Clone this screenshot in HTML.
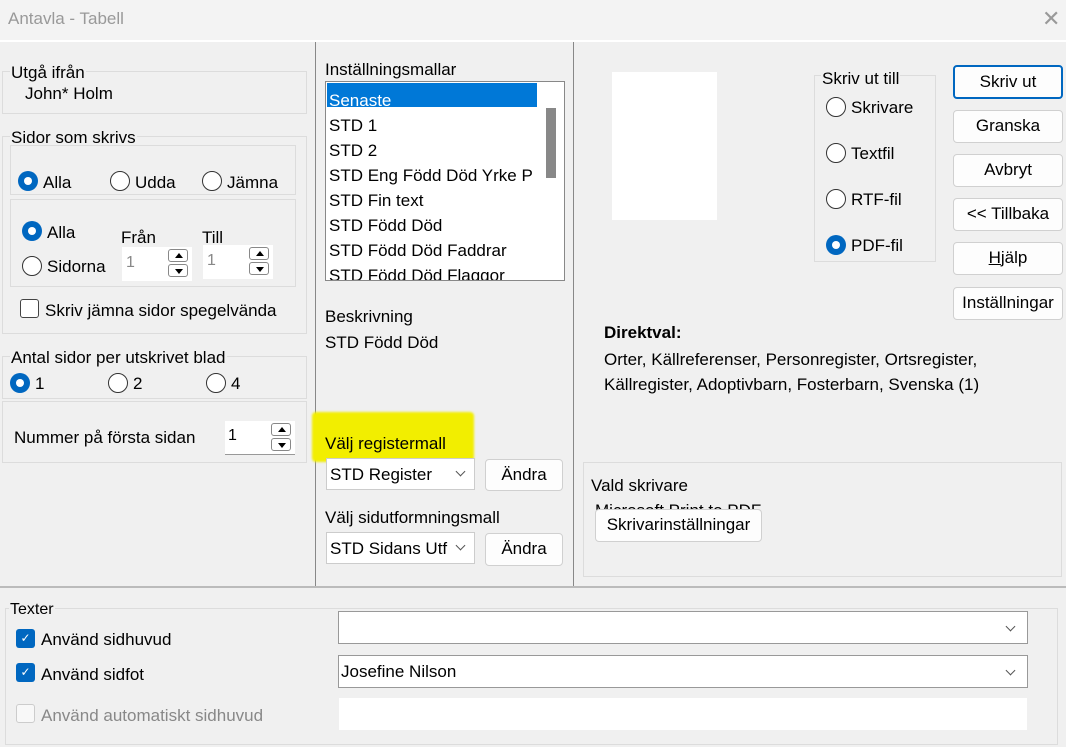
<!DOCTYPE html>
<html><head><meta charset="utf-8"><style>
*{box-sizing:border-box;margin:0;padding:0}
body{width:1066px;height:747px;background:#f0f0f0;font-family:"Liberation Sans",sans-serif;font-size:16px;color:#000;position:relative;overflow:hidden}
.a{position:absolute;white-space:nowrap}
.g{position:absolute;border:1px solid #dcdcdc}
.lb{position:absolute;background:#f0f0f0;padding:0 1px;line-height:18px}
.r{position:absolute;width:20px;height:20px;border-radius:50%;border:1px solid #333;background:#fff}
.r.on{border:none;background:#0067c0}
.r.on::after{content:"";position:absolute;left:6px;top:6px;width:8px;height:8px;border-radius:50%;background:#fff}
.btn{position:absolute;background:#fdfdfd;border:1px solid #d0d0d0;border-radius:4px;text-align:center;line-height:30px;font-size:17px}
.spin{position:absolute;background:#fff}
.spin .u,.spin .d{position:absolute;right:4px;width:20px;height:13px;border:1px solid #888;border-radius:3px;background:#fff}
.spin .u::after{content:"";position:absolute;left:6px;top:3px;border:4px solid transparent;border-bottom:5px solid #000;border-top:none}
.spin .d::after{content:"";position:absolute;left:6px;top:4px;border:4px solid transparent;border-top:5px solid #000;border-bottom:none}
.cb{position:absolute;background:#fff;border:1px solid #888}
.chev{position:absolute;width:7px;height:7px;border-right:1px solid #555;border-bottom:1px solid #555;transform:rotate(45deg)}
.t17{font-size:17px}
</style></head><body>
<div class="a" style="left:0;top:0;width:1066px;height:40px;background:#f3f3f3"></div>
<div class="a" style="left:8px;top:9px;color:#999;font-size:17px">Antavla - Tabell</div>
<div class="a" style="left:1042px;top:6px;color:#999;font-size:22px">✕</div>
<div class="a" style="left:0;top:40px;width:1066px;height:2px;background:#fff"></div>
<div class="a" style="left:315px;top:42px;width:1px;height:545px;background:#888"></div>
<div class="a" style="left:573px;top:42px;width:1px;height:545px;background:#888"></div>
<div class="a" style="left:0;top:586px;width:1066px;height:2px;background:#bbb"></div>

<!-- left -->
<div class="g" style="left:2px;top:71px;width:305px;height:43px"></div>
<div class="lb t17" style="left:10px;top:64px">Utgå ifrån</div>
<div class="a t17" style="left:25px;top:84px">John* Holm</div>

<div class="g" style="left:2px;top:136px;width:305px;height:198px"></div>
<div class="lb t17" style="left:10px;top:129px">Sidor som skrivs</div>
<div class="g" style="left:10px;top:145px;width:286px;height:50px"></div>
<div class="r on" style="left:18px;top:171px"></div><div class="a t17" style="left:43px;top:173px">Alla</div>
<div class="r" style="left:110px;top:171px"></div><div class="a t17" style="left:135px;top:173px">Udda</div>
<div class="r" style="left:202px;top:171px"></div><div class="a t17" style="left:227px;top:173px">Jämna</div>
<div class="g" style="left:10px;top:199px;width:286px;height:88px"></div>
<div class="r on" style="left:22px;top:221px"></div><div class="a t17" style="left:47px;top:223px">Alla</div>
<div class="r" style="left:22px;top:256px"></div><div class="a t17" style="left:47px;top:257px">Sidorna</div>
<div class="a t17" style="left:121px;top:228px">Från</div>
<div class="a t17" style="left:202px;top:228px">Till</div>
<div class="spin" style="left:122px;top:247px;width:70px;height:34px"><span class="a" style="left:4px;top:7px;color:#888">1</span><div class="u" style="top:2px"></div><div class="d" style="top:17px"></div></div>
<div class="spin" style="left:203px;top:245px;width:70px;height:34px"><span class="a" style="left:4px;top:7px;color:#888">1</span><div class="u" style="top:2px"></div><div class="d" style="top:17px"></div></div>
<div class="cb" style="left:20px;top:299px;width:19px;height:19px;border-color:#444;border-radius:3px"></div>
<div class="a t17" style="left:45px;top:301px">Skriv jämna sidor spegelvända</div>

<div class="g" style="left:2px;top:356px;width:305px;height:43px"></div>
<div class="lb t17" style="left:10px;top:349px">Antal sidor per utskrivet blad</div>
<div class="r on" style="left:10px;top:373px"></div><div class="a t17" style="left:35px;top:374px">1</div>
<div class="r" style="left:108px;top:373px"></div><div class="a t17" style="left:133px;top:374px">2</div>
<div class="r" style="left:206px;top:373px"></div><div class="a t17" style="left:231px;top:374px">4</div>
<div class="g" style="left:2px;top:401px;width:305px;height:62px"></div>
<div class="a t17" style="left:14px;top:428px">Nummer på första sidan</div>
<div class="spin" style="left:225px;top:421px;width:70px;height:34px;border-bottom:1px solid #999"><span class="a" style="left:3px;top:6px">1</span><div class="u" style="top:2px"></div><div class="d" style="top:17px"></div></div>

<!-- middle -->
<div class="a t17" style="left:325px;top:60px">Inställningsmallar</div>
<div class="a" style="left:325px;top:81px;width:240px;height:200px;background:#fff;border:1px solid #888;overflow:hidden">
<div class="a" style="left:1px;top:1px;width:210px;height:24px;background:#0078d7"></div>
<div class="a t17" style="left:3px;top:6px;line-height:25px;color:#000">
<span style="color:#fff">Senaste</span><br>STD 1<br>STD 2<br>STD Eng Född Död Yrke P<br>STD Fin text<br>STD Född Död<br>STD Född Död Faddrar<br>STD Född Död Flaggor<br>STD Född Död Foto</div>
<div class="a" style="left:215px;top:0;width:24px;height:200px;background:#fff"></div>
<div class="a" style="left:220px;top:26px;width:10px;height:70px;background:#888"></div>
</div>
<div class="a t17" style="left:325px;top:307px">Beskrivning</div>
<div class="a t17" style="left:325px;top:333px">STD Född Död</div>
<div class="a" style="left:312px;top:412px;width:162px;height:50px;background:#f2ee00;border-radius:4px;filter:blur(1px)"></div>
<div class="a t17" style="left:325px;top:434px">Välj registermall</div>
<div class="a" style="left:326px;top:458px;width:149px;height:32px;background:#fff;border:1px solid #ccc"><span class="a t17" style="left:3px;top:6px">STD Register</span><div class="chev" style="left:130px;top:9px"></div></div>
<div class="btn" style="left:485px;top:459px;width:78px;height:32px">Ändra</div>
<div class="a t17" style="left:325px;top:508px">Välj sidutformningsmall</div>
<div class="a" style="left:326px;top:532px;width:149px;height:32px;background:#fff;border:1px solid #ccc"><span class="a t17" style="left:3px;top:6px">STD Sidans Utf</span><div class="chev" style="left:130px;top:9px"></div></div>
<div class="btn" style="left:485px;top:533px;width:78px;height:33px">Ändra</div>

<!-- right -->
<div class="a" style="left:612px;top:72px;width:105px;height:148px;background:#fff"></div>
<div class="g" style="left:814px;top:75px;width:122px;height:187px"></div>
<div class="lb t17" style="left:821px;top:70px">Skriv ut till</div>
<div class="r" style="left:826px;top:97px"></div><div class="a t17" style="left:851px;top:98px">Skrivare</div>
<div class="r" style="left:826px;top:143px"></div><div class="a t17" style="left:851px;top:144px">Textfil</div>
<div class="r" style="left:826px;top:189px"></div><div class="a t17" style="left:851px;top:190px">RTF-fil</div>
<div class="r on" style="left:826px;top:235px"></div><div class="a t17" style="left:851px;top:236px">PDF-fil</div>
<div class="btn" style="left:953px;top:65px;width:110px;height:34px;border:2px solid #0067c0;line-height:30px">Skriv ut</div>
<div class="btn" style="left:953px;top:110px;width:110px;height:33px">Granska</div>
<div class="btn" style="left:953px;top:154px;width:110px;height:33px">Avbryt</div>
<div class="btn" style="left:953px;top:198px;width:110px;height:33px">&lt;&lt; Tillbaka</div>
<div class="btn" style="left:953px;top:242px;width:110px;height:33px"><u>H</u>jälp</div>
<div class="btn" style="left:953px;top:287px;width:110px;height:33px">Inställningar</div>
<div class="a t17" style="left:604px;top:323px;font-weight:bold">Direktval:</div>
<div class="a t17" style="left:604px;top:350px">Orter, Källreferenser, Personregister, Ortsregister,</div>
<div class="a t17" style="left:604px;top:375px">Källregister, Adoptivbarn, Fosterbarn, Svenska (1)</div>
<div class="g" style="left:583px;top:462px;width:479px;height:115px"></div>
<div class="lb t17" style="left:590px;top:477px">Vald skrivare</div>
<div class="a t17" style="left:595px;top:501px">Microsoft Print to PDF</div>
<div class="btn" style="left:595px;top:509px;width:167px;height:33px;top:509px">Skrivarinställningar</div>

<!-- bottom -->
<div class="g" style="left:5px;top:608px;width:1053px;height:137px"></div>
<div class="lb" style="left:9px;top:601px">Texter</div>
<div class="a" style="left:16px;top:629px;width:19px;height:19px;background:#0067c0;border-radius:3px;color:#fff;font-size:12px;text-align:center;line-height:19px">✓</div>
<div class="a t17" style="left:41px;top:630px">Använd sidhuvud</div>
<div class="a" style="left:16px;top:663px;width:19px;height:19px;background:#0067c0;border-radius:3px;color:#fff;font-size:12px;text-align:center;line-height:19px">✓</div>
<div class="a t17" style="left:41px;top:665px">Använd sidfot</div>
<div class="a" style="left:16px;top:704px;width:19px;height:19px;background:#f8f8f8;border:1px solid #ccc;border-radius:3px"></div>
<div class="a t17" style="left:41px;top:706px;color:#888">Använd automatiskt sidhuvud</div>
<div class="a" style="left:338px;top:611px;width:690px;height:33px;background:#fff;border:1px solid #999"><div class="chev" style="left:668px;top:11px"></div></div>
<div class="a" style="left:338px;top:655px;width:690px;height:33px;background:#fff;border:1px solid #999"><span class="a t17" style="left:2px;top:6px">Josefine Nilson</span><div class="chev" style="left:668px;top:11px"></div></div>
<div class="a" style="left:339px;top:698px;width:688px;height:32px;background:#fff"></div>
</body></html>
